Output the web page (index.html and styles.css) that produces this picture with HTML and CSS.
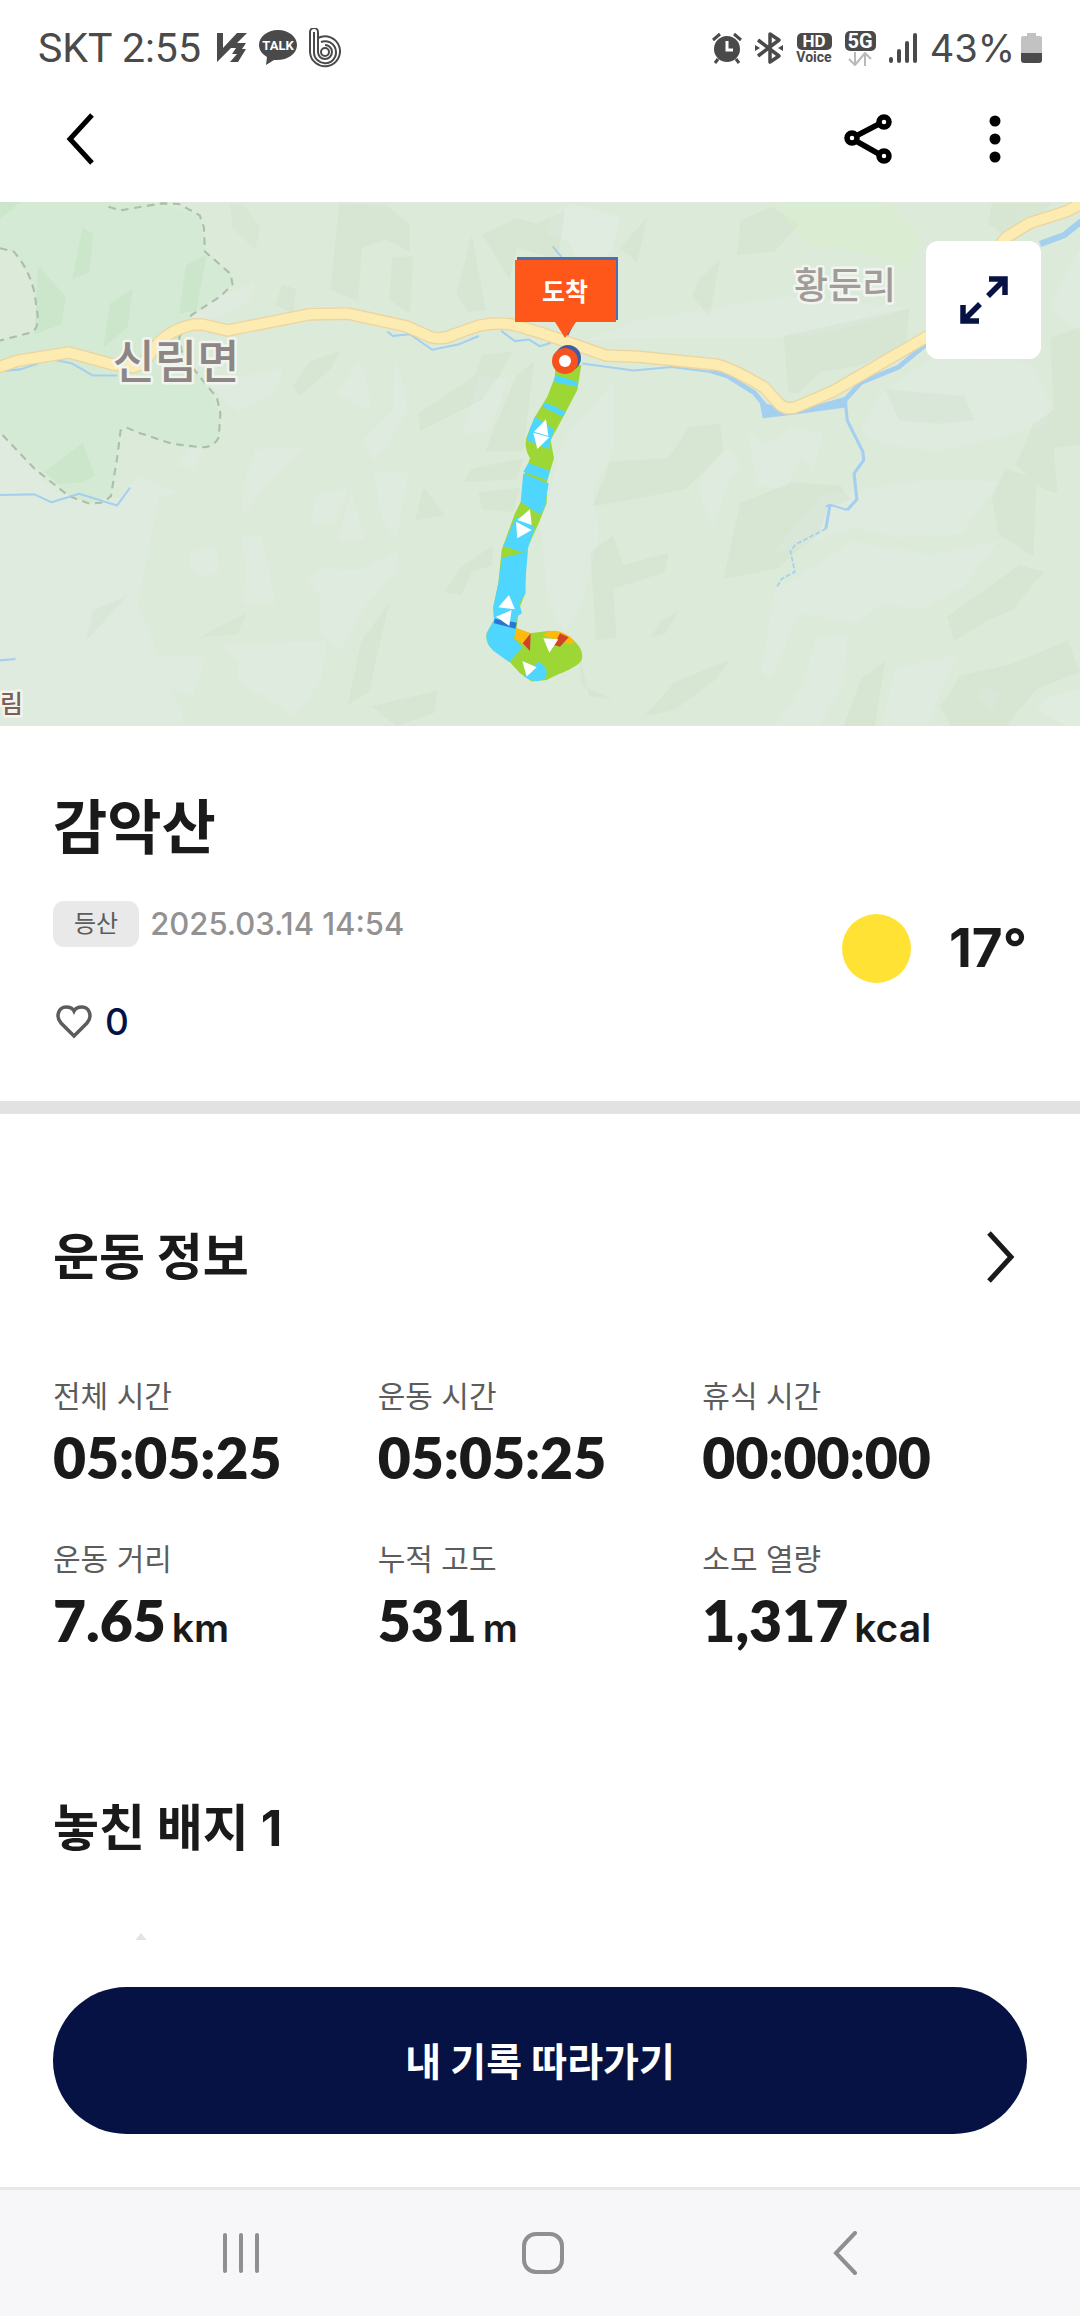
FILE: index.html
```html
<!DOCTYPE html>
<html lang="ko">
<head>
    <meta charset="UTF-8">
    <meta name="viewport" content="width=device-width, initial-scale=1.0">
    <title>감악산</title>
    <link rel="stylesheet" href="styles.css">
</head>
<body>
    <div class="app">
        <!-- 상태바 -->
        <div class="status-bar">
            <div class="status-left">
                <span>SKT 2:55</span>
                <svg width="30" height="30" viewBox="0 0 30 30" fill="#4a4a4a"><path d="M0 0H6V15L20 0H30L20 10H29L25 16H29L21 29H13L20 21H15L19 15H14L0 29Z"/></svg>
                <svg width="38" height="36" viewBox="0 0 38 36"><path d="M19 0C8 0 0 7 0 15C0 20 3 24 8 27L7 35L15 30C28 31 38 24 38 15C38 7 30 0 19 0Z" fill="#4a4a4a"/><text class="talk" x="19" y="20" text-anchor="middle">TALK</text></svg>
                <svg width="32" height="40" viewBox="0 0 32 40" fill="none" stroke="#4a4a4a" stroke-width="2"><path d="M1 24V4A3 3 0 0 1 9 4V10A15 15 0 1 1 1 24Z"/><path d="M5 24V4M9 10V24A7 7 0 1 0 16 17"/><path d="M5 24A11 11 0 1 0 12 14"/><circle cx="16" cy="24" r="4"/></svg>
            </div>
            <div class="status-right">
                <svg width="30" height="32" viewBox="0 0 30 32"><circle cx="15" cy="17" r="13" fill="#4a4a4a"/><path d="M1 8L8 2M29 8L22 2M6 27L3 31M24 27L27 31" stroke="#4a4a4a" stroke-width="3"/><path d="M15 9V18H21" stroke="#fff" stroke-width="3" fill="none"/></svg>
                <svg width="28" height="34" viewBox="0 0 28 34" fill="none" stroke="#4a4a4a" stroke-width="3.5" stroke-linejoin="round"><path d="M3 9L24 25L15 31V3L24 9L3 25"/><path d="M0 14L5 17L0 20ZM28 14L23 17L28 20Z" fill="#4a4a4a" stroke="none"/></svg>
                <div class="hd"><b>HD</b><span>Voice</span></div>
                <div class="net">
                    <b>5G</b>
                    <svg width="24" height="14" viewBox="0 0 24 14" fill="none" stroke="#b9b9b9" stroke-width="2"><path d="M7 0V12M1 7L7 13L12 7M17 14V2M12 7L17 1L23 7"/></svg>
                </div>
                <svg width="28" height="30" viewBox="0 0 28 30" stroke="#4a4a4a" stroke-width="4" stroke-linecap="round"><path d="M2 26V28M10 18V28M18 10V28M26 2V28"/></svg>
                <span class="percent">43%</span>
                <svg class="battery" width="21" height="30" viewBox="0 0 21 30"><path d="M6 0H15V3H19Q21 3 21 5V20H0V5Q0 3 2 3H6Z" fill="#c2c2c2"/><path d="M0 20H21V27Q21 30 18 30H3Q0 30 0 27Z" fill="#4a4a4a"/></svg>
            </div>
        </div>

        <!-- 상단 헤더 -->
        <header class="header">
            <button class="icon-btn" aria-label="뒤로">
                <svg width="28" height="52" viewBox="0 0 28 52" fill="none" stroke="#000" stroke-width="5"><path d="M26 2L4 26L26 50"/></svg>
            </button>
            <div class="header-actions">
                <button class="icon-btn" aria-label="공유">
                    <svg width="48" height="50" viewBox="0 0 48 50" fill="none" stroke="#000" stroke-width="5.5"><circle cx="8" cy="24" r="5"/><circle cx="40" cy="8" r="5"/><circle cx="40" cy="42" r="5"/><path d="M12 22L35 10M12 27L35 40"/></svg>
                </button>
                <button class="icon-btn" aria-label="더보기">
                    <svg width="12" height="48" viewBox="0 0 12 48"><circle cx="6" cy="6" r="5.5"/><circle cx="6" cy="24" r="5.5"/><circle cx="6" cy="42" r="5.5"/></svg>
                </button>
            </div>
        </header>

        <main class="content">
            <!-- 지도 -->
            <div class="map">
                <svg class="map-svg" viewBox="0 0 1080 524" preserveAspectRatio="xMidYMid slice">
                    <defs>
                        <path id="road" d="M-10 518L50 497L200 473L330 508L385 515Q420 510 440 470Q480 410 560 392L590 392L660 409L900 362L1010 360L1180 397L1250 428Q1285 438 1320 420L1390 395Q1440 385 1490 392L1568 415L1760 482L1850 485L2080 508Q2120 515 2220 575L2260 620Q2285 645 2320 628L2420 585L2700 422L2860 220L2920 140L2990 97L3100 62L3146 36"/>
                    </defs>
                    <rect width="1080" height="524" fill="#dcead9"/>
                    <g transform="translate(0 -12.4) scale(.3444)">
                        <!-- 지형 (밝은 면) -->
                        <g fill="#e4ede6" opacity=".6">
                            <path d="M0 710L130 850L330 915L400 830L510 880L390 920L360 1060L380 1130L250 1180L60 1300L180 1440L160 1560H0Z"/>
                            <path d="M640 310L740 270L720 330L600 380L560 370Z"/>
                            <path d="M600 560L820 520L800 590L690 645L640 600Z"/>
                            <path d="M1040 500L980 590L1080 645L1060 540ZM1150 490L1185 640L1090 790L1050 730L1140 640ZM1390 540L1475 550L1420 700L1345 710Z"/>
                            <path d="M740 755L880 752L800 830L700 950L710 850ZM550 745L590 760L560 820L520 800Z"/>
                            <path d="M1085 820L1185 822L1150 1020L1110 960ZM925 880L1010 868L970 970L900 965ZM1020 880L1060 1015L980 1020Z"/>
                            <path d="M700 1010L760 1005L800 1200H705L715 1100ZM550 1050L630 1040L635 1110L590 1125L550 1100Z"/>
                            <path d="M920 1100L1050 1105L1155 1050L1150 1110L1060 1210L990 1335L930 1290V1180L890 1140Z"/>
                            <path d="M640 1320L950 1312L930 1430L850 1530L780 1480L690 1430V1370ZM180 1390L320 1400L325 1558H200Z"/>
                            <path d="M400 1360L600 1350L560 1470L500 1450ZM180 940L240 960L235 1090L190 1060ZM105 940L135 950L130 1060L105 1050Z"/>
                            <path d="M1660 40L1800 80L1780 170L1700 250L1650 150L1590 130L1600 80Z"/>
                            <path d="M1850 380L2280 310L2640 345L2400 420L2260 430L1790 430L1700 440Z"/>
                            <path d="M2110 750L2150 800L2110 860L2070 980L2030 880L2040 830ZM2170 700L2220 740L2300 690L2390 710L2360 830L2330 780L2280 870L2200 860Z"/>
                            <path d="M1640 720L1780 560V760L1720 870L1740 1000L1690 1200L1640 1290L1590 1190L1570 960Z"/>
                            <path d="M2500 700L2550 600L2700 490L2990 500L3050 620L3040 680L2900 720L2720 760L2560 740Z"/>
                            <path d="M2380 890L2700 840L2900 850L2790 1000L2600 1010L2480 980L2310 1040L2240 1060Z"/>
                            <path d="M2250 1160L2360 1100L2470 1020L2700 1060L2900 1020L2800 1150L2680 1220L2560 1200L2490 1260L2320 1230L2240 1420L2210 1400Z"/>
                            <path d="M2370 1300L2460 1290L2450 1430L2380 1558H2250L2330 1440ZM2600 1390L2780 1350L2690 1558H2560Z"/>
                            <path d="M3136 170L3050 340L3136 420ZM3136 1450L3050 1470L3010 1510L3100 1558H3136ZM2850 1440L2910 1460L2880 1510L2840 1480Z"/>
                            <path d="M0 880L460 900L400 1200L540 1558H0Z"/>
                        </g>
                        <!-- 지형 (어두운 면) -->
                        <g fill="#d1e4cf" opacity=".5">
                            <path d="M670 40L710 50L755 110L740 175L675 110ZM985 40L1120 45L1190 100V180L1120 145L1050 170L1040 325L960 290Z"/>
                            <path d="M1140 195L1200 195L1190 360L1130 320ZM1370 135L1410 350L1360 355L1325 300ZM820 275L860 290L850 360L800 335Z"/>
                            <path d="M1400 130L1500 85L1560 100L1640 60L1620 200L1500 170L1480 260Z"/>
                            <path d="M850 570L900 500L990 468L960 520L870 600ZM1215 650L1380 540L1400 480L1490 470L1450 540L1400 610L1220 700Z"/>
                            <path d="M1410 760L1440 680L1500 540L1550 500L1520 760ZM1345 850L1370 810L1520 780L1500 840ZM1390 880L1510 865L1490 935L1400 930Z"/>
                            <path d="M1230 865L1290 945L1205 960ZM1290 1170L1340 1095L1430 1035V1090L1370 1110L1340 1175Z"/>
                            <path d="M1130 1200L1070 1460L1010 1495L1050 1310ZM1080 1500L1270 1455L1260 1520L1150 1558ZM580 1300L715 1230L690 1290ZM250 1310L270 1220L370 1180Z"/>
                            <path d="M2150 90L2240 50L2320 100L2250 180L2140 190ZM2090 205L2060 370L2010 310L2030 260ZM1800 170L1880 80L1850 210Z"/>
                            <path d="M2275 425L2640 345L2630 450L2500 510L2380 530L2320 590H2290Z"/>
                            <path d="M1770 790L1940 780L2000 690L2090 680L2100 760L1990 870L1720 920L1750 850Z"/>
                            <path d="M2150 910L2300 850L2440 860L2470 900L2400 930L2380 1000L2300 1060L2260 1100L2100 1130Z"/>
                            <path d="M1715 1050L1780 1005L1810 1090L1940 1055L1930 1110L1780 1160L1790 1300L1730 1310Z"/>
                            <path d="M2880 900L2920 810L3010 840L3000 1065L2900 1000ZM3050 430L3136 400V740L3060 750L3070 880L3030 870L2950 800L3000 680L3060 640Z"/>
                            <path d="M2750 1240L2960 1090L3030 1110L2940 1220L2870 1250L2770 1310ZM2570 580L2800 600L2830 670L2720 680L2610 670Z"/>
                            <path d="M1870 1530L1960 1430L2120 1365L2080 1420L1960 1510ZM2450 1558L2500 1420L2570 1370L2540 1558Z"/>
                            <path d="M2730 1500L2790 1410L2930 1380L3100 1310L3136 1400L3010 1450L2920 1558H2760ZM1680 1340L1710 1470L1780 1480L1690 1440ZM1890 1300L1920 1250L1970 1225L1930 1290Z"/>
                            <path d="M2880 40H3050L3000 110L2930 140L2870 100Z"/>
                        </g>
                        <path d="M2260 40H2570Q2660 100 2668 160L2640 230Q2480 160 2380 170Q2300 130 2260 40Z" fill="#d8eccc" opacity=".6"/>
                        <!-- 국립공원 -->
                        <path d="M0 36H330L470 40L580 75L595 180L670 245L675 275L555 365L520 430L530 480L590 555L640 650L635 720Q620 750 580 748L500 738L365 690L350 700L322 890L260 912L200 890L0 705V438L90 415Q120 400 105 340Q100 250 40 180L0 170Z" fill="#d2e9d1" opacity=".75"/>
                        <path d="M240 110L270 130L260 240L210 260ZM110 220L190 310L180 390L100 420ZM320 330L385 290L370 400L300 460ZM540 220L600 190L570 350L520 360ZM130 820L240 735L275 830L240 850L170 855ZM0 36H60L0 85Z" fill="#c5e2c4" opacity=".6"/>
                        <g fill="none" stroke="#a9bfa8" stroke-width="6" stroke-dasharray="22 16">
                            <path d="M315 50L350 60L470 40L520 42L580 75L592 110L595 180L670 245L675 275L640 310L555 365L520 430L530 480L590 555L630 605L640 650L635 720Q620 750 580 748L500 738L400 705L365 690L350 700L340 780L322 890L300 908L260 912L200 890L100 810L0 705"/>
                            <path d="M0 170L40 180Q100 250 105 340Q120 400 90 415L0 438"/>
                        </g>
                        <!-- 하천 -->
                        <g fill="none" stroke="#a5cfee" stroke-width="6" stroke-linejoin="round">
                            <path d="M0 887L100 885L150 908L230 883L340 917L378 865M0 527L60 522L110 505M160 495L210 505L270 540L340 540M0 1367L45 1363"/>
                            <path d="M1125 412L1140 425L1190 420L1255 465L1330 450L1390 425M1455 410L1495 440L1535 435L1568 455L1600 445M1605 165L1630 195"/>
                            <path d="M1690 505L1840 525L1950 515L2070 530M2398 920L2410 915L2460 930"/>
                            <path d="M2455 620L2460 670L2505 760L2508 785L2480 825L2488 900L2460 930M2410 915L2398 985" stroke-width="9"/>
                            <path d="M2398 985L2310 1030L2295 1050L2308 1110L2270 1130L2255 1155" stroke-width="5" stroke-dasharray="14 6"/>
                            <path d="M2060 525L2110 540L2190 590L2220 625M2450 615L2500 560L2610 515L2700 440" stroke-width="14"/>
                            <path d="M3020 158L3090 132L3140 92" stroke-width="18"/>
                        </g>
                        <path d="M2205 615L2300 645L2460 600V632L2290 655L2215 664Z" fill="#a5cfee"/>
                        <!-- 도로 -->
                        <g fill="none" stroke-linejoin="round">
                            <use href="#road" stroke="#ecd5a0" stroke-width="37"/>
                            <use href="#road" stroke="#fdecb2" stroke-width="29"/>
                        </g>
                    </g>
                    <g class="place">
                        <text class="place-lg" x="176" y="176" text-anchor="middle">신림면</text>
                        <text class="place-md" x="845" y="97" text-anchor="middle">황둔리</text>
                        <text class="place-sm" x="0" y="511">림</text>
                    </g>
                    <!-- 이동 경로 -->
                    <g transform="translate(460 38) scale(.3333)">
                        <path d="M286 375L364 375L352 450L310 530L272 600L282 655L262 720L260 790L236 850L204 920L192 1000L196 1060L176 1110L170 1165L210 1180L270 1172Q320 1175 350 1210Q372 1235 365 1260Q355 1280 290 1305L260 1320L215 1325L180 1300L148 1265L100 1230Q75 1210 80 1180L102 1140L100 1100L115 1030L125 930L165 820L185 780L190 710L210 655Q190 620 200 590L225 530L262 470L285 410Z" fill="#9dd736"/>
                        <path d="M285 405L352 425L350 440L282 425ZM255 487L318 515L308 530L248 500ZM225 530L282 568L265 627L200 600L210 565ZM205 670L270 692L262 720L190 695ZM190 700L250 725L266 730L254 800L240 825L182 785ZM168 830L225 862L202 930L185 936L130 918ZM126 954L182 940L204 930L198 1000L196 1060L178 1090L186 1120L170 1130L168 1166L162 1195L188 1222L148 1267L100 1232Q75 1210 80 1180L102 1140L100 1100L115 1030ZM190 1308L235 1265Q270 1285 256 1315Q230 1335 190 1308Z" fill="#4fd6ff"/>
                        <path d="M104 1136L170 1148L166 1166L102 1150Z" fill="#2b73d2"/>
                        <path d="M170 1165L213 1180L190 1212L163 1195ZM248 1185L265 1174Q310 1165 345 1205L330 1212Z" fill="#ffb90f"/>
                        <path d="M212 1180L188 1210L210 1233ZM300 1180L326 1192L300 1220L282 1215Z" fill="#cf4328"/>
                        <path d="M258 538L222 575L265 588ZM220 578L268 592L232 627ZM210 808L172 840L215 855ZM168 845L215 870L172 895ZM147 1065L115 1102L165 1108ZM108 1130L155 1110L148 1158ZM250 1195L295 1198L268 1238ZM187 1263L230 1282L200 1310Z" fill="#fff"/>
                    </g>
                    <!-- 도착 마커 -->
                    <path d="M517 55H618V118H576L568 134L557 118H517Z" fill="#4a6fae"/>
                    <path d="M515 58H616V120H576L565 136L555 120H515Z" fill="#ff5619"/>
                    <circle cx="568" cy="156" r="13" fill="#3c5da5"/>
                    <circle cx="565" cy="159" r="13" fill="#f5521e"/>
                    <circle cx="565" cy="159" r="6" fill="#fff"/>
                    <text class="marker" x="565" y="99" text-anchor="middle">도착</text>
                </svg>
                <button class="expand-btn" aria-label="지도 확대">
                    <svg width="48" height="48" viewBox="0 0 48 48" fill="none" stroke="#051243" stroke-width="5.5"><path d="M29 3H45V19M45 3L28 20M3 29V45H19M3 45L20 28"/></svg>
                </button>
            </div>

            <!-- 기록 요약 -->
            <section class="summary">
                <h1>감악산</h1>
                <div class="summary-row">
                    <div>
                        <div class="meta">
                            <span class="tag">등산</span>
                            <time>2025.03.14 14:54</time>
                        </div>
                        <button class="like">
                            <svg width="36" height="34" viewBox="0 0 36 34" fill="none" stroke="#5c5c5c" stroke-width="3.5"><path d="M18 31L5 18C-1 11 3 2 10 2C14 2 17 4 18 6C19 4 22 2 26 2C33 2 37 11 31 18Z"/></svg>
                            <span>0</span>
                        </button>
                    </div>
                    <div class="weather">
                        <span class="sun"></span>
                        <strong>17°</strong>
                    </div>
                </div>
            </section>

            <!-- 운동 정보 -->
            <section class="info">
                <div class="section-head">
                    <h2>운동 정보</h2>
                    <button class="icon-btn" aria-label="운동 정보 상세">
                        <svg width="28" height="52" viewBox="0 0 28 52" fill="none" stroke="#1a1a1a" stroke-width="5"><path d="M2 2L24 26L2 50"/></svg>
                    </button>
                </div>
                <dl class="stats">
                    <div><dt>전체 시간</dt><dd>05:05:25</dd></div>
                    <div><dt>운동 시간</dt><dd>05:05:25</dd></div>
                    <div><dt>휴식 시간</dt><dd>00:00:00</dd></div>
                    <div><dt>운동 거리</dt><dd>7.65<small>km</small></dd></div>
                    <div><dt>누적 고도</dt><dd>531<small>m</small></dd></div>
                    <div><dt>소모 열량</dt><dd>1,317<small>kcal</small></dd></div>
                </dl>
            </section>

            <!-- 놓친 배지 -->
            <section class="badges">
                <h2>놓친 배지 1</h2>
                <svg class="badge" width="176" height="200" viewBox="0 0 176 200"><path d="M88 0L176 110L88 200L0 110Z" fill="#e5e3e8"/></svg>
            </section>
        </main>

        <div class="cta">
            <button class="cta-btn">내 기록 따라가기</button>
        </div>

        <!-- 하단 내비게이션 -->
        <nav class="nav-bar">
            <button class="icon-btn" aria-label="최근 앱">
                <svg width="38" height="42" viewBox="0 0 38 42" stroke="#8f8f8f" stroke-width="4" stroke-linecap="round"><path d="M3 3V39M19 3V39M35 3V39"/></svg>
            </button>
            <button class="icon-btn" aria-label="홈">
                <svg width="42" height="42" viewBox="0 0 42 42" fill="none" stroke="#8f8f8f" stroke-width="4"><rect x="2" y="2" width="38" height="38" rx="12"/></svg>
            </button>
            <button class="icon-btn" aria-label="이전">
                <svg width="24" height="44" viewBox="0 0 24 44" fill="none" stroke="#8f8f8f" stroke-width="4" stroke-linecap="round"><path d="M22 2L3 22L22 42"/></svg>
            </button>
        </nav>
    </div>
</body>
</html>
```

FILE: styles.css
```css
* { box-sizing: border-box; }
body {
    margin: 0;
    background-color: #fff;
    color: #1a1a1a;
    font-family: Inter, "Noto Sans CJK KR", sans-serif;
}
h1, h2, dl, dd { margin: 0; }
svg { display: block; flex-shrink: 0; }
button {
    padding: 0;
    border: 0;
    background: none;
    color: inherit;
    font-family: inherit;
    cursor: pointer;
}
.icon-btn { display: flex; align-items: center; justify-content: center; }
.app { display: flex; flex-direction: column; height: 100vh; }

/* 상태바 */
.status-bar {
    display: flex;
    justify-content: space-between;
    align-items: center;
    height: 76px;
    padding: 20px 38px 0 38px;
    color: #4a4a4a;
    font-family: Roboto, sans-serif;
    font-size: 41px;
    line-height: 56px;
}
.status-left, .status-right { display: flex; align-items: center; }
.status-left { gap: 12px; }
.status-left span { margin-right: 4px; }
.status-right { gap: 13px; }
.status-right .percent { font-family: Inter, sans-serif; font-size: 38px; }
.talk { font: 700 13px Roboto, sans-serif; fill: #fff; }
.hd, .net { display: flex; flex-direction: column; align-items: center; }
.hd b, .net b {
    border-radius: 5px;
    background-color: #4a4a4a;
    color: #fff;
    text-align: center;
}
.hd b { width: 35px; font-size: 17px; line-height: 17px; }
.hd span { font-size: 14px; font-weight: 700; line-height: 14px; }
.net b { width: 31px; margin-bottom: 1px; font-size: 20px; line-height: 20px; }
.battery { margin-left: -7px; }

/* 헤더 */
.header {
    display: flex;
    justify-content: space-between;
    align-items: center;
    height: 126px;
    padding: 0 79px 0 66px;
}
.header-actions { display: flex; align-items: center; gap: 97px; }

.content { flex: 1; min-height: 0; overflow-y: auto; scrollbar-width: none; }

/* 지도 */
.map { position: relative; height: 524px; overflow: hidden; }
.map-svg { width: 100%; height: 100%; }
.place { font-family: "Noto Sans CJK KR", sans-serif; font-weight: 500; stroke: #f2f5ef; stroke-width: 5px; paint-order: stroke; stroke-linejoin: round; }
.place-lg { font-size: 46px; fill: #8e8685; }
.place-md { font-size: 37px; fill: #a19c9a; }
.place-sm { font-size: 25px; fill: #7a6055; }
.marker { font: 700 25px "Noto Sans CJK KR", sans-serif; fill: #fff; }
.expand-btn {
    position: absolute;
    top: 39px;
    right: 39px;
    display: flex;
    align-items: center;
    justify-content: center;
    width: 115px;
    height: 118px;
    border-radius: 12px;
    background-color: #fff;
}

/* 요약 */
.summary { padding: 62px 53px 55px; border-bottom: 13px solid #e2e2e2; }
.summary h1 { font-size: 59px; line-height: 80px; }
.summary-row { display: flex; justify-content: space-between; padding-top: 32px; }
.meta { display: flex; align-items: center; gap: 11px; }
.meta time { color: #929292; font-size: 31px; font-weight: 500; line-height: 48px; }
.tag {
    padding: 0 21px;
    border-radius: 11px;
    background-color: #e9e9e9;
    color: #5c5c5c;
    font-size: 24px;
    line-height: 46px;
}
.like {
    display: flex;
    align-items: center;
    gap: 13px;
    margin-top: 50px;
    padding-left: 3px;
    color: #051243;
    font-size: 37px;
    font-weight: 500;
    line-height: 48px;
}
.weather { display: flex; align-items: center; gap: 38px; height: 96px; }
.weather strong { font-size: 53px; line-height: 60px; }
.sun { width: 69px; height: 69px; border-radius: 50%; background-color: #ffe234; }

/* 운동 정보 */
.info { padding: 108px 53px 0; }
.section-head { display: flex; justify-content: space-between; align-items: center; padding-right: 12px; }
h2 { font-size: 50px; line-height: 70px; }
.stats { display: grid; grid-template-columns: repeat(3, 1fr); row-gap: 47px; padding-top: 82px; }
.stats dt { color: #5c5c5c; font-size: 30px; line-height: 44px; }
.stats dd {
    padding-top: 6px;
    font-family: Lato, sans-serif;
    font-size: 57px;
    font-weight: 800;
    line-height: 66px;
}
.stats small { margin-left: 6px; font-family: Inter, sans-serif; font-size: 39px; font-weight: 600; line-height: 1; }

/* 배지 */
.badges { padding: 140px 53px 0; }
.badge { margin-top: 70px; }

/* 하단 버튼 */
.cta { padding: 47px 53px 53px; }
.cta-btn {
    width: 100%;
    height: 147px;
    padding-bottom: 3px;
    border-radius: 74px;
    background-color: #051243;
    color: #fff;
    font-size: 39px;
    font-weight: 700;
}

/* 내비게이션 */
.nav-bar {
    display: grid;
    grid-template-columns: repeat(3, 1fr);
    height: 129px;
    padding: 0 84px 0 90px;
    border-top: 3px solid #e8e8e8;
    background-color: #f7f7f9;
}
```
